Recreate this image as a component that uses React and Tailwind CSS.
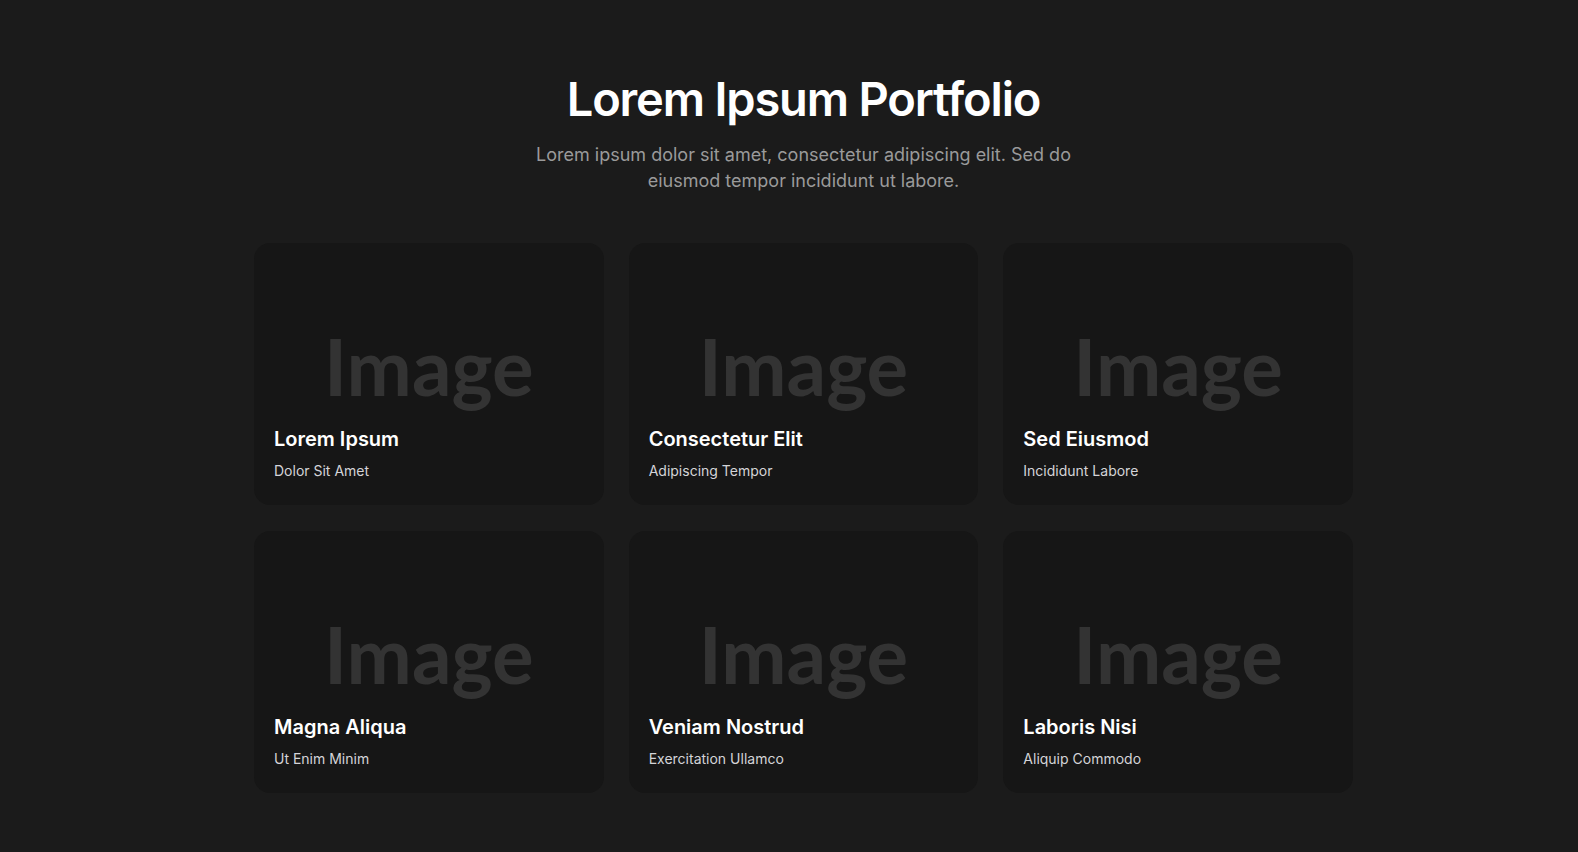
import React from 'react'

const projects = [
  { title: 'Lorem Ipsum', subtitle: 'Dolor Sit Amet' },
  { title: 'Consectetur Elit', subtitle: 'Adipiscing Tempor' },
  { title: 'Sed Eiusmod', subtitle: 'Incididunt Labore' },
  { title: 'Magna Aliqua', subtitle: 'Ut Enim Minim' },
  { title: 'Veniam Nostrud', subtitle: 'Exercitation Ullamco' },
  { title: 'Laboris Nisi', subtitle: 'Aliquip Commodo' }
]

function ProjectCard({ title, subtitle }) {
  return (
    <div className="relative h-[262px] rounded-2xl bg-[#161616] overflow-hidden">
      {/* placeholder image */}
      <div className="absolute inset-0 flex items-center justify-center pb-[17px]">
        <span className="font-['Lato',sans-serif] font-bold text-[78px] leading-none text-[#333333]">
          Image
        </span>
      </div>
      <div className="absolute left-0 right-0 bottom-0 px-5 pb-6">
        <h3 className="text-xl font-semibold text-white">{title}</h3>
        <p className="mt-2 text-sm text-[#d4d4d8]">{subtitle}</p>
      </div>
    </div>
  )
}

export default function App() {
  return (
    <div className="min-h-screen bg-[#1b1b1b] font-['Inter',sans-serif] pl-[29px]">
      <div className="pt-[75px] pb-[60px]">
        <div className="text-center">
          <h1 className="text-[47px] leading-none font-semibold tracking-tight text-white">
            Lorem Ipsum Portfolio
          </h1>
          <p className="mt-[20px] mx-auto max-w-xl text-lg leading-[26px] text-[#9a9a9a]">
            Lorem ipsum dolor sit amet, consectetur adipiscing elit. Sed do eiusmod tempor incididunt ut labore.
          </p>
        </div>

        <div className="mt-[49px] mx-auto max-w-[1099px] grid grid-cols-3 gap-x-[25px] gap-y-[26px]">
          {projects.map((p) => (
            <ProjectCard key={p.title} title={p.title} subtitle={p.subtitle} />
          ))}
        </div>
      </div>
    </div>
  )
}
